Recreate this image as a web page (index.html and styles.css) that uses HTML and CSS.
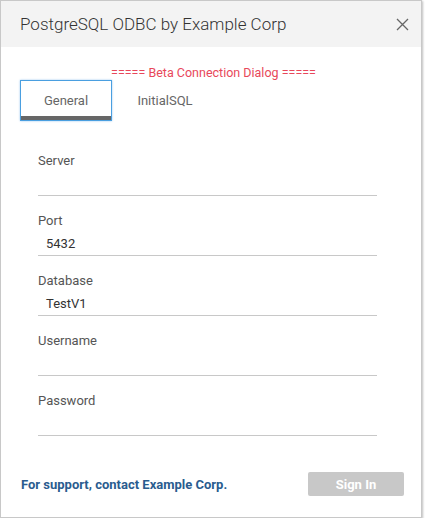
FILE: index.html
```html
<!DOCTYPE html>
<html>
<head>
<meta charset="utf-8">
<link rel="stylesheet" href="styles.css">
</head>
<body>
<div class="dialog">
  <div class="header">
    <span class="title">PostgreSQL ODBC by Example Corp</span>
    <svg class="close" width="13" height="13" viewBox="0 0 13 13"><path d="M1 1L12 12M12 1L1 12" stroke="#666" stroke-width="1.3" fill="none"/></svg>
  </div>
  <div class="body">
    <div class="beta">===== Beta Connection Dialog =====</div>
    <div class="tabs">
      <div class="tab active">General</div>
      <div class="tab">InitialSQL</div>
    </div>
    <div class="fields">
      <div class="field"><div class="label">Server</div><div class="value"></div></div>
      <div class="field"><div class="label">Port</div><div class="value">5432</div></div>
      <div class="field"><div class="label">Database</div><div class="value">TestV1</div></div>
      <div class="field"><div class="label">Username</div><div class="value"></div></div>
      <div class="field"><div class="label">Password</div><div class="value"></div></div>
    </div>
    <div class="footer">
      <span class="support">For support, contact Example Corp.</span>
      <div class="signin">Sign In</div>
    </div>
  </div>
</div>
</body>
</html>
```
FILE: styles.css
```css
html, body { margin: 0; padding: 0; background: #fff; }
body { font-family: Roboto, "Liberation Sans", sans-serif; color: #333; }
.dialog {
  width: 420px; height: 516px;
  border: 1px solid #c8c8c8;
  box-shadow: 1px 1px 2px rgba(0,0,0,0.25);
  background: #fff;
  display: flex; flex-direction: column;
}
.header {
  height: 46px; background: #f3f3f3;
  display: flex; align-items: center; justify-content: space-between;
  padding: 0 12px 0 19px;
}
.title { font-size: 17px; color: #333; font-weight: 300; }
.close { display: block; }
.body { flex: 1; display: flex; flex-direction: column; padding: 0 17px 0 20px; }
.beta { text-align: center; color: #e8475a; font-size: 12.5px; margin-top: 19px; line-height: 14px; margin-left: 2px; }
.tabs { display: flex; margin-top: 0; margin-left: -1px; }
.tab {
  width: 92px; height: 41px; box-sizing: border-box;
  display: flex; align-items: center; justify-content: center;
  font-size: 13px; color: #666;
}
.tab.active {
  border: 1px solid #4a9fe0;
  box-shadow: inset 0 -4px 0 #666, 0 0 2px #9cc8f0;
}
.tab + .tab { margin-left: 13px; width: 80px; }
.fields { padding: 32px 27px 0 17px; display: flex; flex-direction: column; }
.field { height: 60px; box-sizing: border-box; }
.label { font-size: 13px; color: #555; line-height: 16px; }
.value { height: 18px; margin-top: 5px; padding-top: 3px; border-bottom: 1px solid #c8c8c8; font-size: 13px; color: #333; padding-left: 8px; line-height: 14px; }
.footer { margin-top: auto; margin-bottom: 21px; display: flex; align-items: center; justify-content: space-between; }
.support { color: #2a5c8f; font-weight: bold; font-size: 13px; }
.signin { width: 96px; height: 24px; background: #c8c8c8; color: #fff; font-weight: bold; font-size: 13px; border-radius: 2px; display: flex; align-items: center; justify-content: center; }
```
